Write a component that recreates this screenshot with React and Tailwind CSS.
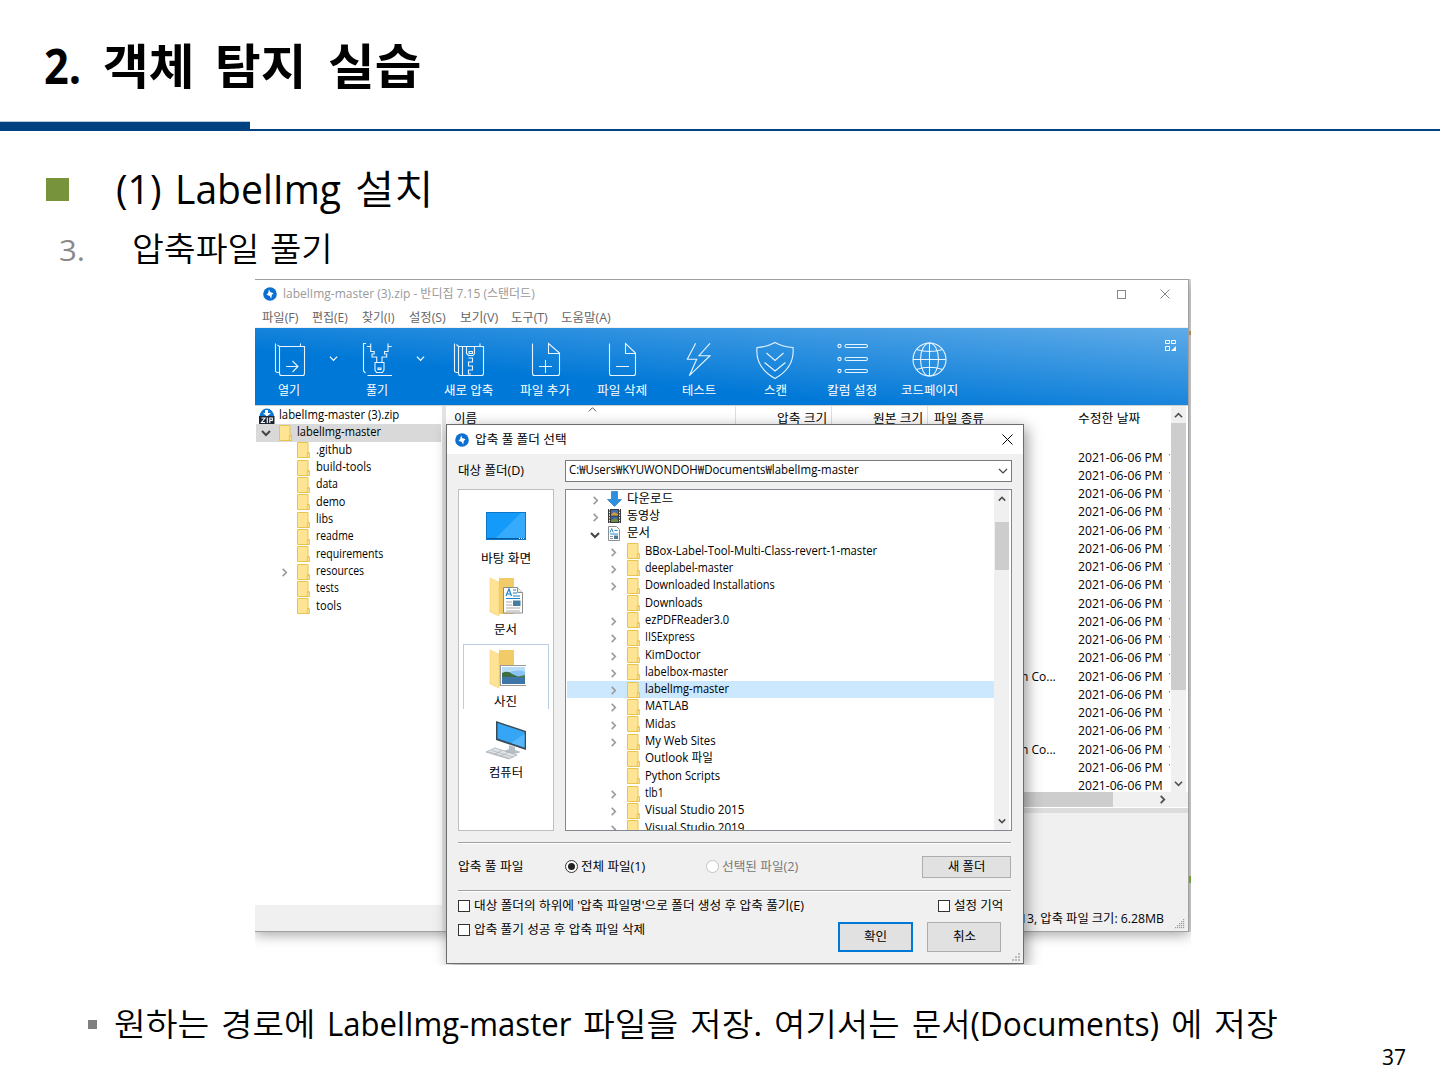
import { useLayoutEffect, useRef } from "react";

/* Single-line text condensed or widened to a given advance width. */
function Fit({ w, className = "", children }) {
  const ref = useRef(null);
  useLayoutEffect(() => {
    const el = ref.current;
    const apply = () => {
      el.style.transform = "none";
      el.style.transform = `scaleX(${w / el.offsetWidth})`;
    };
    apply();
    document.fonts?.ready.then(apply);
  }, [w, children]);
  return (
    <span className={`block shrink-0 whitespace-pre ${className}`} style={{ width: w }}>
      <span ref={ref} className="inline-block origin-left">{children}</span>
    </span>
  );
}

/* A line of words, each with its own width; Latin runs keep the regular weight. */
const Words = ({ words, className = "" }) => (
  <div className={`flex shrink-0 ${className}`}>
    {words.map(([t, w, latin], i) => (
      <Fit key={i} w={w}>{t}{latin && <span className="font-normal">{latin}</span>}</Fit>
    ))}
  </div>
);

const Chev = ({ d = "right", c = "#9a9a9a", s = 9, sw = 1.8, className = "" }) => {
  const p = { right: "M3 1l4 4-4 4", down: "M1 3l4 4 4-4", up: "M1 7l4-4 4 4" }[d];
  return (
    <svg width={s} height={s} viewBox="0 0 10 10" fill="none" stroke={c} strokeWidth={sw} className={`shrink-0 ${className}`}>
      <path d={p} />
    </svg>
  );
};

const Folder = () => (
  <svg width="13" height="16" viewBox="0 0 13 16" className="shrink-0">
    <path d="M.5 .5h10.500v10h1.200v5H.5z" fill="#ffe593" stroke="#e9c44f" />
    <path d="M10.300 15.500v-4.500h1.900v4.500z" fill="#fff0b8" stroke="#e2b93c" strokeWidth=".8" />
  </svg>
);

const Bandi = () => (
  <svg width="14" height="14" viewBox="0 0 14 14" className="shrink-0">
    <circle cx="7" cy="7" r="6.800" fill="#0a6fd0" />
    <path d="M6 2.300L7.200 5l3.300 1.200L8.800 8l-.6 3.700L6.800 9 3.500 7.800 5.200 6z" fill="#fff" />
  </svg>
);

const ZipIcon = () => (
  <svg width="16" height="16" viewBox="0 0 16 16" className="shrink-0">
    <path d="M.5 9a7.300 8.500 0 0 1 14.600 0z" fill="#0a78d4" />
    <path d="M6 2h3v3h3L8 8.500 4 5h2z" fill="#fff" />
    <rect y="8" width="15.500" height="8" fill="#1d2733" />
    <path d="M2.500 10H6l-3.500 4.500H6M8.300 9.500v5.500M10.800 15v-5h2.500v2.500h-2.500" fill="none" stroke="#fff" strokeWidth="1.100" />
  </svg>
);

const toolIcons = {
  open: (<><path d="M4.500 2.500V30q0 1.500 4 1.500M8.500 5.500h25v27q0 2-2 2h-21q-2 0-2-2zM8.500 5.500l-2-1.500M29.500 2.500v3" /><path d="M15 25.500h12M21.500 20l5.500 5.500-5.500 5.500" /></>),
  extract: (<><path d="M7 2.500H4.500V30l2 2M8.500 34.500h24.500" /><path d="M8 5.500h3.700v5h3.500v2.500h-2.200v3h4.700v5.500M32.700 5.500H29v5h-3.500v2.500h2.200v3H23v5.500M11.700 5.500v-3M29 2.500v3M16 21.500h9v7.500l-1.500 2.500h-6L16 29z" /><rect x="19" y="27" width="3" height="1.500" /></>),
  create: (<><path d="M4.500 2.500V30q0 1.500 4 1.500M8.500 5.500h25v27q0 2-2 2h-21q-2 0-2-2zM12.500 5.500v29M8.500 5.500l-2-2M30 2.500v3" /><path d="M16.500 5.500v7l2 2h4.500l1.500-2v-7M19 10.500h3.500v2H19zM18.500 17h4v4h-4v4h4v4h-4v4h2.500" /></>),
  add: (<path d="M5.500 2.500v30q0 2 2 2h23q2 0 2-2v-20.500L21.500 2.500v10h11M12 25.500h13M18.500 19v13" />),
  remove: (<path d="M5.500 2.500v30q0 2 2 2h22q2 0 2-2v-20.500L21.500 2.500v10h10M12 25.500h13" />),
  test: (<path d="M14.700 2.300L6.300 18.300h9.400L8.300 34.700 29 14.700H18L29 2.300" />),
  scan: (<path d="M18 1.500Q10 6 0 6.500q-2 20 18 31 20-11 18-31Q26 6 18 1.500zM9.500 12l8.500 7.500 8.500-7.500M7.500 21.500l10.500 8.500 10.500-8.500" />),
  columns: (<><circle cx="5.500" cy="5" r="1.600" /><circle cx="5.500" cy="18" r="1.600" /><circle cx="5.500" cy="30" r="1.600" /><rect x="11" y="3.500" width="22.500" height="3" rx="1.500" /><rect x="11" y="16.500" width="22.500" height="3" rx="1.500" /><rect x="11" y="28.500" width="22.500" height="3" rx="1.500" /></>),
  globe: (<><circle cx="18.500" cy="18.500" r="16.500" /><ellipse cx="18.500" cy="18.500" rx="9" ry="16.500" /><path d="M18.500 2v33M2 18.500h33M5.500 8.500q13 4 26 0M5.500 28.500q13-4.500 26 0" /></>),
};

const Tool = ({ icon, label, lw, cell }) => (
  <div className={`flex shrink-0 flex-col items-center pt-[13px] ${cell}`}>
    <svg width="36" height="36" viewBox="0 0 36 36" fill="none" stroke="#e8f4ff" strokeWidth="1.100" className="overflow-visible">{toolIcons[icon]}</svg>
    <Fit w={lw} className="mt-[6px] h-4 text-[12px] leading-4 text-white">{label}</Fit>
  </div>
);

const TreeRow = ({ name, w, open, chev, level = 1, sel }) => (
  <div className={`flex h-[17.330px] items-center ${level ? "pl-[22px]" : "pl-[4px]"} ${sel ? "bg-[#d9d9d9]" : ""}`}>
    <span className="flex w-[12px] justify-center">
      {open && <Chev d="down" c="#444" s={10} sw={2} />}
      {chev && <Chev className="mt-[2px]" />}
    </span>
    <span className="ml-[7px] flex w-[18px]"><Folder /></span>
    <Fit w={w} className={`h-[17px] text-[12px] leading-[16px] ${level ? "ml-px" : ""}`}>{name}</Fit>
  </div>
);

const tree = [[".github", 36], ["build-tools", 55], ["data", 22], ["demo", 29], ["libs", 17], ["readme", 38], ["requirements", 67], ["resources", 48, 1], ["tests", 23], ["tools", 25]];

const folders = [
  ["BBox-Label-Tool-Multi-Class-revert-1-master", 232, 1], ["deeplabel-master", 88, 1], ["Downloaded Installations", 130, 1],
  ["Downloads", 58, 0], ["ezPDFReader3.0", 84, 1], ["IISExpress", 50, 1], ["KimDoctor", 56, 1], ["labelbox-master", 83, 1],
  ["labelImg-master", 84, 1], ["MATLAB", 44, 1], ["Midas", 31, 1], ["My Web Sites", 71, 1], ["Outlook 파일", 68, 0],
  ["Python Scripts", 75, 0], ["tlb1", 19, 1], ["Visual Studio 2015", 99, 1], ["Visual Studio 2019", 99, 1],
];

const DownArrow = () => (
  <svg width="15" height="16" viewBox="0 0 15 16"><path d="M4.500.5h6v8H14.500L7.500 15.500.5 8.500h4z" fill="#2f8fdf" stroke="#2379c4" strokeWidth=".7" /></svg>
);
const Film = () => (
  <svg width="13" height="14" viewBox="0 0 13 14"><rect width="13" height="14" fill="#3a3a3a" /><rect x="3" y="1" width="7" height="5.500" fill="#3f6fb5" /><rect x="3" y="7.500" width="7" height="5.500" fill="#3a62a6" /><path d="M3 5.500l3-2.500 4 2v1.500H3z" fill="#d59a3c" /><path d="M3 11.500l4-2.500 3 2v2H3z" fill="#6b8f3e" /><path d="M1.500 0v14M11.500 0v14" stroke="#eee" strokeDasharray="1.500 1.200" /></svg>
);
const Doc = () => (
  <svg width="12" height="15" viewBox="0 0 12 15"><path d="M.5.500h8l3 3v11H.5z" fill="#fff" stroke="#8a8f94" /><path d="M2 6.500l1.700-4 1.500 4M6.500 4.500h3M2 8h8" stroke="#2b8bc9" fill="none" /><path d="M2 10.500h3M2 12.500h3" stroke="#8a8f94" /><rect x="6" y="9.500" width="4" height="3.500" fill="#45769b" /></svg>
);

const FolderBig = ({ children }) => (
  <svg width="40" height="40" viewBox="0 0 40 40">
    <path d="M13 1h15v36H13z" fill="#f0cb67" />
    <path d="M4 1l9 4v34l-9-4z" fill="#ffe395" stroke="#eecb6e" strokeWidth=".5" />
    {children}
  </svg>
);

const places = [
  ["바탕 화면", 50, <svg key="d" width="42" height="40" viewBox="0 0 42 40"><rect x="1.500" y="6.500" width="39" height="27" fill="#149bfa" stroke="#0c76c8" /><path d="M10 33L36 7h4v26z" fill="#37abfb" /><path d="M2 32.500h38" stroke="#0b5a9c" /><path d="M34 32.500h5" stroke="#fff" strokeDasharray="1 1" /></svg>],
  ["문서", 23, <FolderBig key="m"><path d="M17.500 10.500h14l5 5v20.500h-19z" fill="#fff" stroke="#8c8c8c" /><path d="M31.500 10.500v5h5" fill="#eee" stroke="#8c8c8c" /><path d="M20 19l3-7 2.500 7M21 17h4M27 13h3M27 16h4M27 19h7M20 21.500h14" stroke="#1d83c6" strokeWidth="1.200" fill="none" /><path d="M20 25h6M20 28h6M20 31h14M20 34h14" stroke="#aaa" /><rect x="27" y="23.500" width="7.500" height="5.500" fill="#447d9d" /></FolderBig>],
  ["사진", 23, <FolderBig key="p"><rect x="14.500" y="16.500" width="26" height="20" fill="#fff" stroke="#999" /><rect x="16" y="18" width="23" height="17" fill="#88c4f3" /><path d="M16 18h23v5q-8-4-23 3z" fill="#b7dcf7" /><path d="M16 24q6-3 10 1l7 3H16z" fill="#3e6e45" /><path d="M16 28h23v7H16z" fill="#3f76a9" /><path d="M30 28l9-2v3z" fill="#4c7a58" /></FolderBig>],
  ["컴퓨터", 34, <svg key="c" width="42" height="40" viewBox="0 0 42 40"><path d="M11 1l30 10v19L11 20z" fill="#3a4b58" /><path d="M12.500 3l27 9v15.500l-27-9z" fill="#35a5f5" /><path d="M26 23l13.500-9v13.500z" fill="#55b6fa" /><path d="M24 25l6 2v3l6 2q-8 4-17-1l5-2z" fill="#b6bec4" /><path d="M1 32l9-4 22 7-8 4z" fill="#e2e5e8" stroke="#9aa3aa" strokeWidth=".7" /><path d="M4 32l20 6M7 30.500l21 6.500M9 34.500l8-4M15 36.500l8-4" stroke="#a7afb5" strokeWidth=".7" /></svg>],
];

const Check = () => <span className="block h-3 w-3 shrink-0 border border-[#333] bg-white" />;

const Grip = () => (
  <svg width="10" height="10" viewBox="0 0 10 10" fill="#999">
    {[[8, 0], [6, 2], [8, 2], [4, 4], [6, 4], [8, 4], [2, 6], [4, 6], [6, 6], [8, 6], [0, 8], [2, 8], [4, 8], [6, 8], [8, 8]].map(([x, y]) => <rect key={`${x}-${y}`} x={x} y={y} width="1.200" height="1.200" />)}
  </svg>
);

const GripLarge = () => (
  <svg width="9" height="9" viewBox="0 0 9 9" fill="#bcbcbc">
    {[[6, 0], [3, 3], [6, 3], [0, 6], [3, 6], [6, 6]].map(([x, y]) => <rect key={`${x}-${y}`} x={x} y={y} width="2" height="2" />)}
  </svg>
);

function Dialog() {
  return (
    <div className="absolute left-[191px] top-[145px] flex h-[540px] w-[578px] flex-col border border-[#6d6d6d] bg-[#f0f0f0] shadow-[3px_4px_14px_rgba(0,0,0,0.4)]">
      <div className="flex h-[29px] shrink-0 items-center bg-white pl-2 pr-[10px]">
        <Bandi />
        <Fit w={92} className="ml-[6px] h-4 text-[12px] leading-4">압축 풀 폴더 선택</Fit>
        <svg width="11" height="11" viewBox="0 0 11 11" className="ml-auto" stroke="#000" strokeWidth="1"><path d="M.5.500l10 10M10.500.5l-10 10" /></svg>
      </div>
      <div className="flex pl-[11px] pt-[6px]">
        <Fit w={66} className="mr-[41px] h-[22px] text-[12px] leading-[22px]">대상 폴더(D)</Fit>
        <div className="flex h-[22px] w-[447px] items-center justify-between border border-[#7a7a7a] bg-white pl-[3px] pr-[3px]">
          <Fit w={290} className="h-[20px] text-[12px] leading-[18px]">C:₩Users₩KYUWONDOH₩Documents₩labelImg-master</Fit>
          <Chev d="down" c="#444" s={10} sw={1.2} />
        </div>
      </div>
      <div className="mt-[7px] flex h-[342px] shrink-0 gap-[11px] pl-[11px]">
        <div className="w-[96px] border border-[#bfbfbf] bg-white px-1 pt-[11px]">
          {places.map(([name, w, icon], i) => (
            <div key={name} className={`flex h-[71.300px] flex-col items-center ${i === 2 ? "bg-[linear-gradient(#b9cde5,#b9cde5),linear-gradient(#b9cde5,#b9cde5),linear-gradient(#b9cde5,#b9cde5)] bg-[size:100%_1px,1px_65px,1px_65px] bg-[position:0_0,0_0,100%_0] bg-no-repeat" : ""}`}>
              <div className="mt-[5px] h-[40px]">{icon}</div>
              <Fit w={w} className="mr-px mt-[5px] h-4 text-[12px] leading-[16px]">{name}</Fit>
            </div>
          ))}
        </div>
        <div className="flex w-[447px] border border-[#828790] bg-white">
          <div className="h-[340px] w-[428px] shrink-0 overflow-hidden pl-px pt-[0.400px]">
            {[["다운로드", 46, <DownArrow key="a" />], ["동영상", 33, <Film key="f" />], ["문서", 23, <Doc key="d" />]].map(([n, w, ic], i) => (
              <div key={n} className="flex h-[17.330px] items-center pl-[22px]">
                <span className="flex w-[12px] justify-center pt-[3px]">{i === 2 ? <Chev d="down" c="#444" s={10} sw={2} /> : <Chev />}</span>
                <span className="ml-[5px] flex w-[16px] justify-center">{ic}</span>
                <Fit w={w} className="ml-[5px] h-[17px] text-[12px] leading-[16px]">{n}</Fit>
              </div>
            ))}
            {folders.map(([n, w, c], i) => (
              <div key={n} className={`flex h-[17.330px] items-center pl-[40px] ${i === 8 ? "bg-[#cce8ff]" : ""}`}>
                <span className="flex w-[12px] justify-center pt-[2px]">{c ? <Chev /> : null}</span>
                <span className="ml-[8px] flex w-[18px]"><Folder /></span>
                <Fit w={w} className="h-[17px] text-[12px] leading-[16px]">{n}</Fit>
              </div>
            ))}
          </div>
          <div className="flex w-[15px] flex-col items-center justify-between bg-[#f0f0f0] pb-[5px] pt-[5px]">
            <Chev d="up" c="#505050" s={8} sw={2} />
            <span className="mb-auto mt-[19px] block h-[48px] w-[14px] bg-[#cdcdcd]" />
            <Chev d="down" c="#505050" s={8} sw={2} />
          </div>
        </div>
      </div>
      <div className="ml-[11px] mt-[11px] h-[2px] w-[553px] shrink-0 border-b border-t border-b-white border-t-[#a0a0a0]" />
      <div className="flex h-[46px] shrink-0 items-center pl-[11px] pr-3">
        <Fit w={65} className="h-4 text-[12px] leading-4">압축 풀 파일</Fit>
        <span className="mb-px ml-[42px] flex h-[13px] w-[13px] items-center justify-center rounded-full border border-[#333] bg-white"><span className="h-[7px] w-[7px] rounded-full bg-[#222]" /></span>
        <Fit w={64} className="ml-[3px] h-4 text-[12px] leading-4">전체 파일(1)</Fit>
        <span className="mb-px ml-[61px] h-[13px] w-[13px] rounded-full border border-[#c4c4c4] bg-white" />
        <Fit w={76} className="ml-[3px] h-4 text-[12px] leading-4 text-[#777]">선택된 파일(2)</Fit>
        <div className="ml-auto flex h-[22px] w-[89px] items-center justify-center border border-[#adadad] bg-[#e1e1e1]"><Fit w={37} className="h-4 text-[12px] leading-4">새 폴더</Fit></div>
      </div>
      <div className="ml-[11px] h-[2px] w-[553px] shrink-0 border-b border-t border-b-white border-t-[#a0a0a0]" />
      <div className="flex h-[28px] shrink-0 items-center pl-[11px]">
        <Check /><Fit w={330} className="ml-1 h-4 text-[12px] leading-4">대상 폴더의 하위에 '압축 파일명'으로 폴더 생성 후 압축 풀기(E)</Fit>
        <span className="ml-[134px] flex items-center"><Check /><Fit w={49} className="ml-1 h-4 text-[12px] leading-4">설정 기억</Fit></span>
      </div>
      <div className="flex pl-[11px] pt-px">
        <div className="flex h-[18px] items-center"><Check /><Fit w={171} className="ml-1 h-4 text-[12px] leading-4">압축 풀기 성공 후 압축 파일 삭제</Fit></div>
        <div className="ml-[193px] mt-px flex h-[30px] w-[75px] items-center justify-center border-2 border-[#0078d7] bg-[#e1e1e1]"><Fit w={23} className="h-4 text-[12px] leading-4">확인</Fit></div>
        <div className="ml-[14px] mt-px flex h-[30px] w-[74px] items-center justify-center border border-[#adadad] bg-[#e1e1e1]"><Fit w={23} className="h-4 text-[12px] leading-4">취소</Fit></div>
      </div>
      <div className="mr-[2px] mt-auto flex justify-end pb-px"><GripLarge /></div>
    </div>
  );
}

function Archive() {
  return (
    <div className="relative ml-[255px] h-[686px] w-[936px] overflow-hidden">
      <div className="flex w-[936px]">
        <div className="z-0 flex h-[653px] w-[934px] shrink-0 flex-col border-b border-r border-t border-[#a0a0a0] bg-white shadow-[0_3px_12px_rgba(0,0,0,0.35)]">
          <div className="flex h-[28px] shrink-0 items-center pl-2">
            <Bandi />
            <Fit w={252} className="ml-[6px] h-4 text-[12px] leading-[16px] text-[#999]">labelImg-master (3).zip - 반디집 7.15 (스탠더드)</Fit>
            <span className="ml-auto h-[9px] w-[9px] border border-[#888]" />
            <svg width="10" height="10" viewBox="0 0 10 10" className="ml-[34px] mr-[18px]" stroke="#888"><path d="M.5.500l9 9M9.500.5l-9 9" /></svg>
          </div>
          <div className="flex h-[20px] shrink-0 items-center border-b border-[#f0f0f0] pl-[7px] text-[12px] leading-[18px] text-[#666]">
            <Fit w={36} className="mr-[14px]">파일(F)</Fit><Fit w={36} className="mr-[14px]">편집(E)</Fit><Fit w={33} className="mr-[14px]">찾기(I)</Fit><Fit w={37} className="mr-[14px]">설정(S)</Fit><Fit w={38} className="mr-[13px]">보기(V)</Fit><Fit w={37} className="mr-[13px]">도구(T)</Fit><Fit w={50}>도움말(A)</Fit>
          </div>
          <div className="flex h-[77px] shrink-0 bg-[linear-gradient(5deg,#0078d7_34%,#5fabe8_100%)]">
            <Tool icon="open" label="열기" lw={22} cell="w-[68px]" />
            <div className="flex w-5 shrink-0 justify-center pt-[26px]"><Chev d="down" c="#fff" s={9} sw={1.3} /></div>
            <Tool icon="extract" label="풀기" lw={22} cell="w-[68px]" />
            <div className="flex w-[19px] shrink-0 justify-center pt-[26px]"><Chev d="down" c="#fff" s={9} sw={1.3} /></div>
            <Tool icon="create" label="새로 압축" lw={49} cell="w-[76px]" />
            <Tool icon="add" label="파일 추가" lw={50} cell="w-[78px]" />
            <Tool icon="remove" label="파일 삭제" lw={50} cell="w-[76px]" />
            <Tool icon="test" label="테스트" lw={34} cell="w-[78px]" />
            <Tool icon="scan" label="스캔" lw={23} cell="w-[74px]" />
            <Tool icon="columns" label="칼럼 설정" lw={50} cell="w-[79px]" />
            <Tool icon="globe" label="코드페이지" lw={57} cell="w-[76px]" />
            <svg width="11" height="11" viewBox="0 0 11 11" className="ml-auto mr-[12px] mt-3" fill="none" stroke="#fff" strokeWidth="1"><path d="M.5.500h4v3h-4zM6.500.5h4v3h-4zM.5 6.500h4v4h-4z" /><path d="M11 6v5H6z" fill="#fff" stroke="none" /></svg>
          </div>
          <div className="flex min-h-0 flex-1 border-t border-[#d0d0d0]">
            <div className="flex w-[187px] shrink-0 flex-col">
              <div className="pl-px pr-px pt-[0.900px]">
                <div className="flex h-[17.330px] items-center pl-[3px]">
                  <ZipIcon />
                  <Fit w={120} className="ml-1 h-[17px] text-[12px] leading-[16px]">labelImg-master (3).zip</Fit>
                </div>
                <TreeRow name="labelImg-master" w={84} level={0} open sel />
                {tree.map(([n, w, c]) => <TreeRow key={n} name={n} w={w} chev={c} />)}
              </div>
              <div className="mt-auto h-[26px] bg-[#f0f0f0]" />
            </div>
            <div className="w-[4px] shrink-0 bg-[#e3e3e3]" />
            <div className="flex min-w-0 flex-1 flex-col">
              <div className="flex h-[386px] shrink-0">
                <div className="flex w-[725px] shrink-0 flex-col">
                  <div className="flex h-[24px] shrink-0 text-[12px] leading-[25px]">
                    <div className="flex w-[290px] border-r border-[#dedede] pl-2"><Fit w={23}>이름</Fit><Chev d="up" c="#555" s={9} sw={1.1} className="ml-[111px] -mt-px" /></div>
                    <div className="flex w-[96px] justify-end border-r border-[#dedede] pr-1"><Fit w={50}>압축 크기</Fit></div>
                    <div className="flex w-[96px] justify-end border-r border-[#dedede] pr-1"><Fit w={50}>원본 크기</Fit></div>
                    <div className="flex pl-[6px]"><Fit w={50}>파일 종류</Fit></div>
                    <div className="ml-[94px] flex"><Fit w={62}>수정한 날짜</Fit></div>
                  </div>
                  <div className="mt-[17.600px]">
                    {Array.from({ length: 19 }, (_, i) => (
                      <div key={i} className="flex h-[18.250px] items-center pl-[575px]">
                        <Fit w={35} className="h-4 text-[12px] leading-[18px]">{i === 12 || i === 16 ? "n Co..." : "       "}</Fit>
                        <span className="ml-[22px] flex w-[92px] gap-[5px] overflow-hidden"><Fit w={85} className="h-4 text-[12px] leading-[18px]">2021-06-06 PM</Fit>{i < 18 && <Fit w={6} className="h-4 text-[12px] leading-[18px]">1</Fit>}</span>
                      </div>
                    ))}
                  </div>
                </div>
                <div className="flex w-[15px] shrink-0 flex-col items-center bg-[#f0f0f0] pb-1 pt-[5px]">
                  <Chev d="up" c="#505050" s={9} sw={1.8} />
                  <span className="mb-auto mt-[3px] h-[267px] w-[15px] bg-[#cdcdcd]" />
                  <Chev d="down" c="#505050" s={9} sw={1.8} />
                </div>
              </div>
              <div className="flex h-[15px] shrink-0 items-center bg-[#f0f0f0]">
                <span className="h-[15px] w-[667px] bg-[#cdcdcd]" />
                <Chev c="#505050" s={9} sw={2} className="ml-auto mr-[21px]" />
              </div>
              <div className="h-[6px] shrink-0 border-t border-white bg-[#dcdcdc]" />
              <div className="flex flex-1 items-end justify-end bg-[#f0f0f0]">
                <Fit w={144} className="mb-1 mr-[11px] h-4 text-[12px] leading-4">13, 압축 파일 크기: 6.28MB</Fit>
                <span className="mb-[2px] mr-[3px]"><Grip /></span>
              </div>
            </div>
          </div>
        </div>
        <div className="flex h-[653px] w-[2px] flex-col bg-[#dcdcdc]">
          <span className="mt-[52px] h-[4px] bg-[#c9a15c]" />
          <span className="mt-[541px] h-[7px] bg-[#7ac142]" />
        </div>
      </div>
      <Dialog />
    </div>
  );
}

export default function App() {
  return (
    <div className="flex h-[1080px] w-[1440px] flex-col overflow-hidden bg-white font-['Open_Sans','Noto_Sans_CJK_KR',sans-serif] text-black">
      <header className="flex h-[121px] shrink-0 items-center pl-[44px]">
        <Words className="mt-[11px] h-[60px] gap-[21.500px] text-[48px] font-bold leading-[60px]" words={[["2.", 37], ["객체", 91], ["탐지", 91], ["실습", 93]]} />
      </header>
      <div className="flex h-[10px] shrink-0 items-end">
        <div className="h-[10px] w-[250px] border-t border-[#b8c8d8] bg-[#00417f]" />
        <div className="h-[2px] flex-1 bg-[#004380]" />
      </div>
      <div className="mt-[31px] flex h-[54px] shrink-0 items-center pl-[46px]">
        <span className="h-[23px] w-[23px] bg-[#77933c]" />
        <Words className="ml-[47px] h-[54px] gap-[14px] text-[40px] font-[350] leading-[54px]" words={[["", 45, "(1)"], ["", 166, "LabelImg"], ["설치", 79]]} />
      </div>
      <div className="mt-[3px] flex h-[60px] shrink-0 items-center pl-[59px]">
        <Fit w={26} className="h-[44px] text-[30px] leading-[46px] text-[#898989]">3.</Fit>
        <Words className="ml-[47px] h-[44px] gap-[11px] text-[33px] font-[350] leading-[44px]" words={[["압축파일", 127], ["풀기", 63]]} />
      </div>
      <Archive />
      <div className="mt-[34px] flex h-[50px] shrink-0 items-center pl-[88px]">
        <span className="h-[9px] w-[9px] bg-[#808080]" />
        <Words className="ml-[17px] h-[50px] gap-[12px] text-[32px] font-[350] leading-[50px]" words={[["원하는", 95], ["경로에", 94], ["", 244, "LabelImg-master"], ["파일을", 95], ["저장", 72, "."], ["여기서는", 126], ["문서", 247, "(Documents)"], ["에", 31], ["저장", 64]]} />
      </div>
      <div className="-mt-[7px] flex shrink-0 justify-end pr-[34px]">
        <Fit w={24} className="h-[30px] text-[21px] leading-[30px]">37</Fit>
      </div>
    </div>
  );
}
